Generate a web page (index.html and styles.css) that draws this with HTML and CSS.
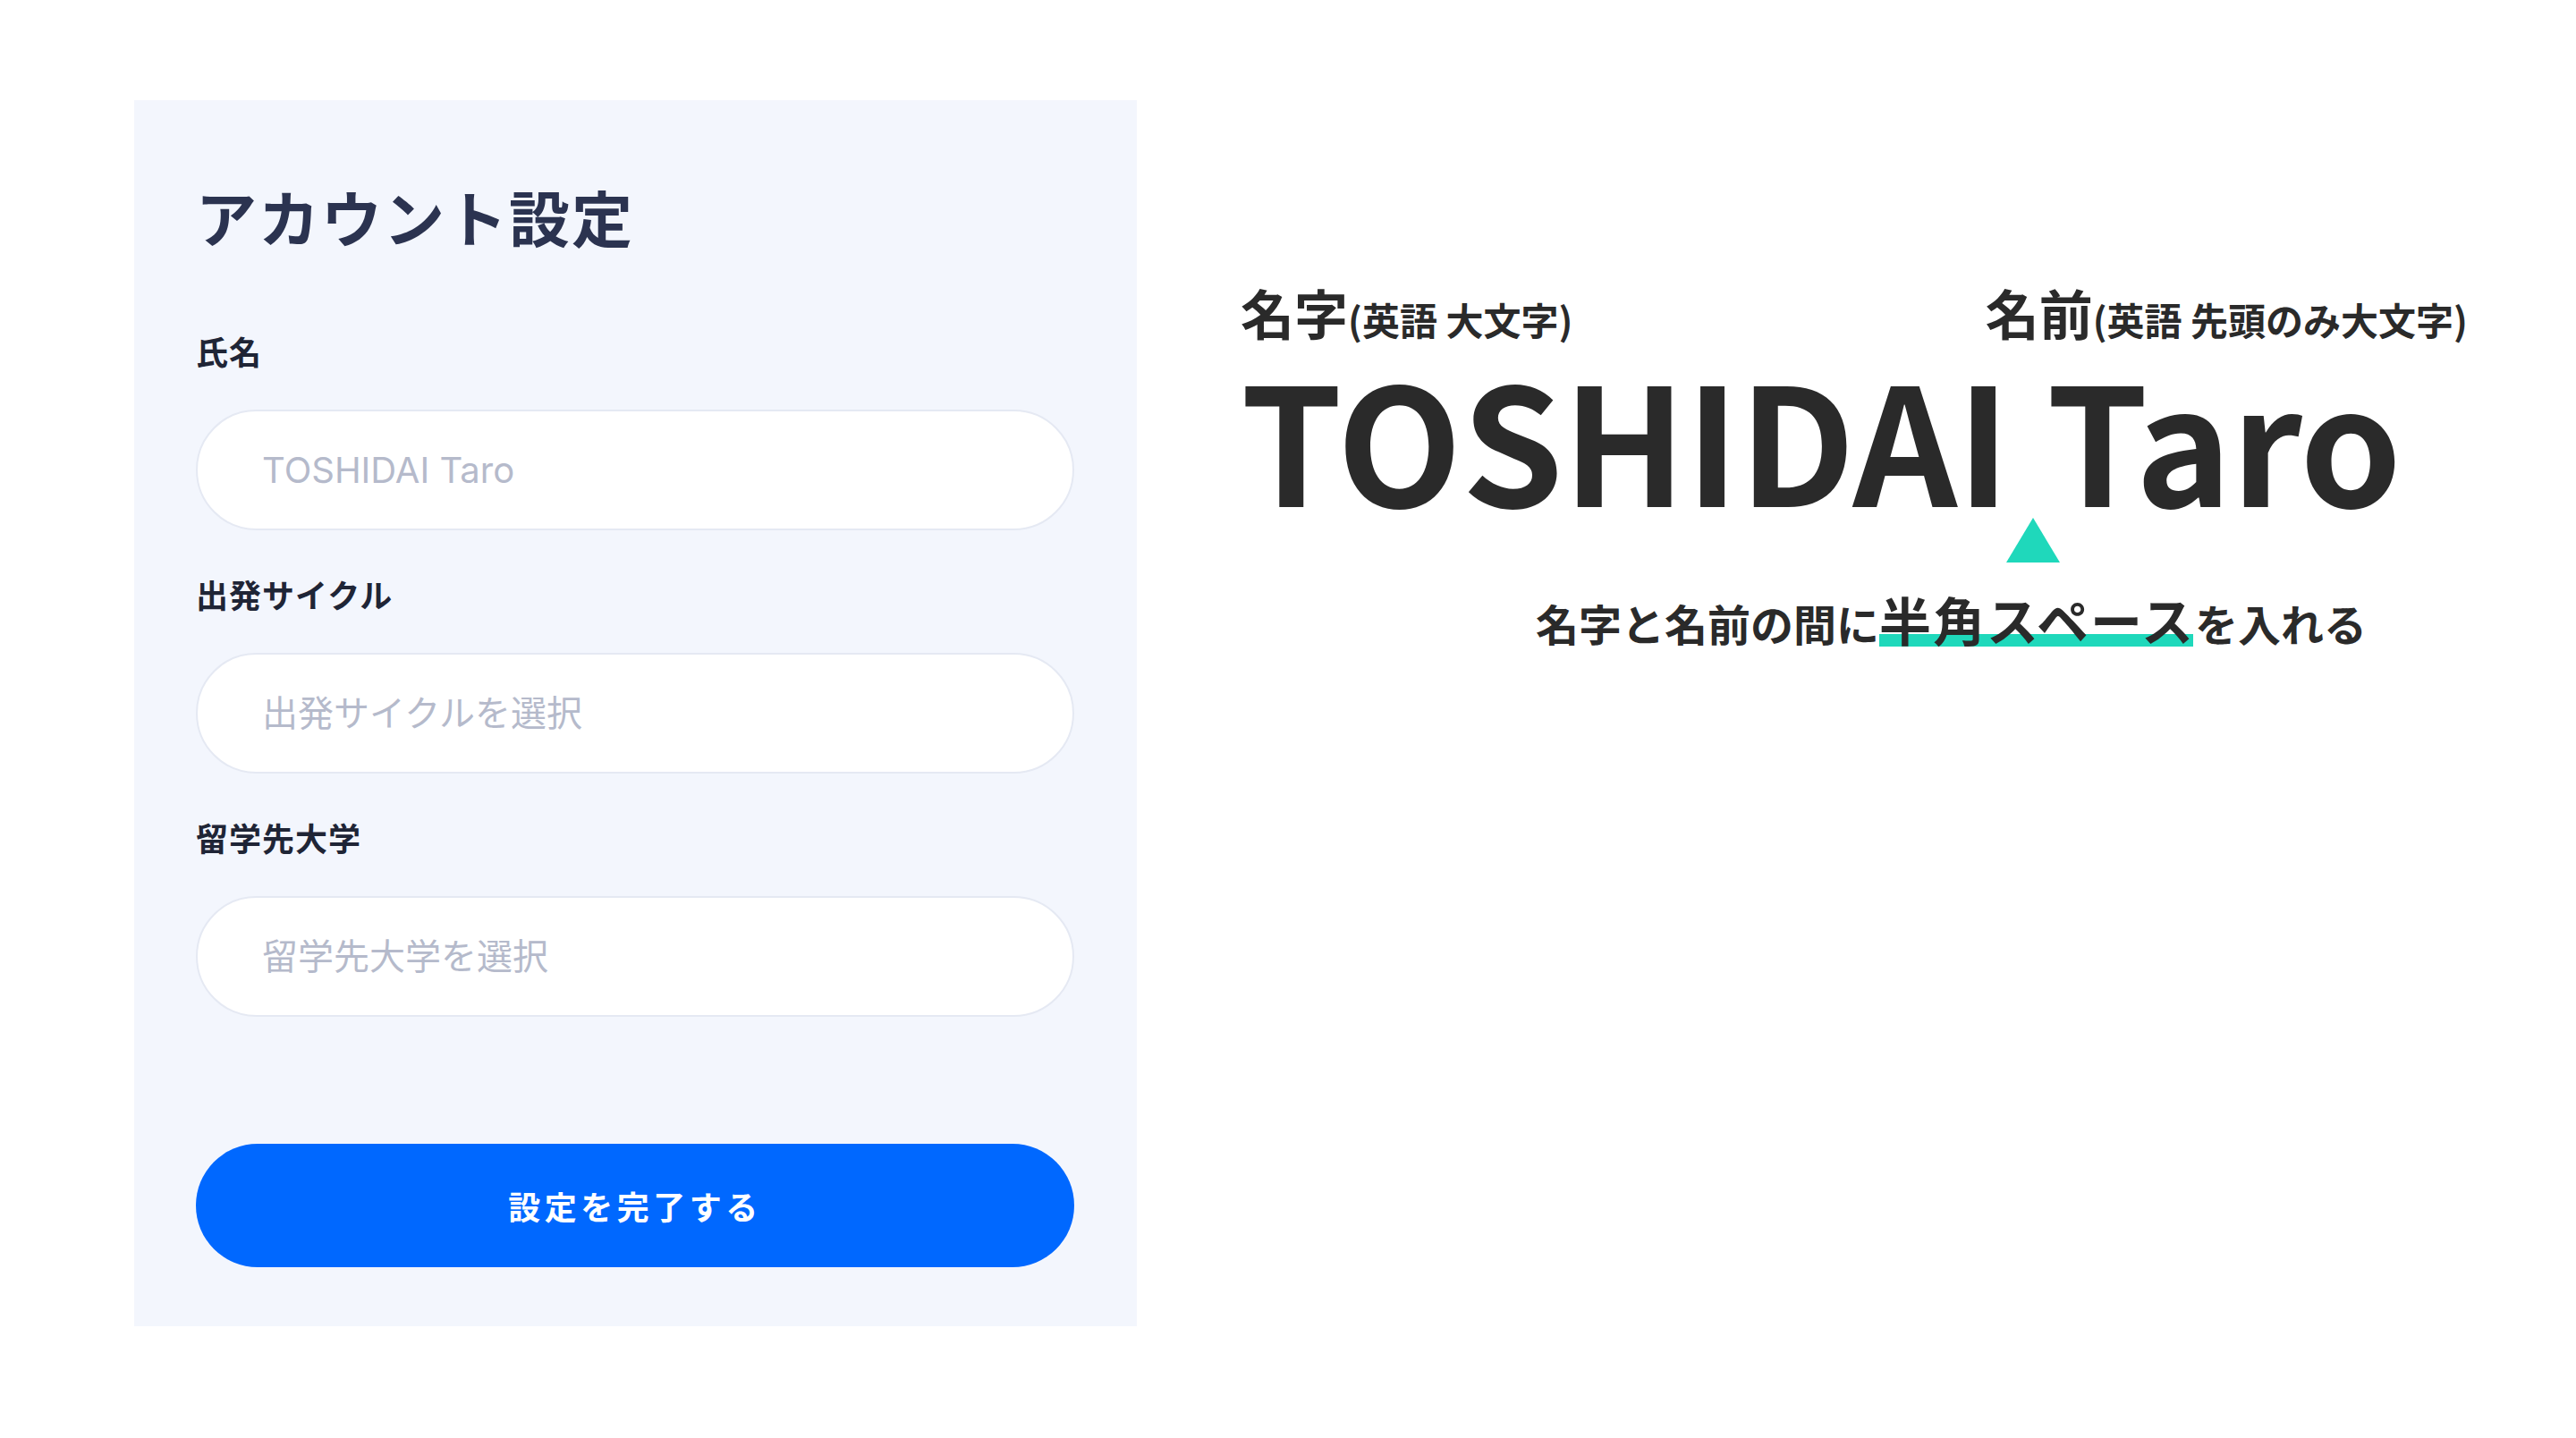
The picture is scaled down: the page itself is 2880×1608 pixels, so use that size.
FILE: index.html
```html
<!DOCTYPE html>
<html lang="ja">
<head>
  <meta charset="UTF-8">
  <meta name="viewport" content="width=device-width, initial-scale=1.0">
  <title>アカウント設定</title>
  <link rel="stylesheet" href="styles.css">
</head>
<body>
  <div class="page">

    <section class="panel">
      <h1 class="panel-title">アカウント設定</h1>
      <form class="settings-form">
        <div class="field">
          <label for="fullName">氏名</label>
          <input type="text" id="fullName" name="fullName" placeholder="TOSHIDAI Taro" />
        </div>

        <div class="field">
          <label for="cycle">出発サイクル</label>
          <select id="cycle" name="cycle">
            <option value="">出発サイクルを選択</option>
          </select>
        </div>

        <div class="field">
          <label for="university">留学先大学</label>
          <select id="university" name="university">
            <option value="">留学先大学を選択</option>
          </select>
        </div>

        <button type="submit">設定を完了する</button>
      </form>
    </section>

    <section class="guide">
      <div class="guide-labels">
        <div class="guide-label">名字<small>(英語 大文字)</small></div>
        <div class="guide-label">名前<small>(英語 先頭のみ大文字)</small></div>
      </div>
      <p class="guide-name">TOSHIDAI Taro</p>
      <div class="guide-arrow"></div>
      <p class="guide-note">名字と名前の間に<span class="mark">半角スペース</span>を入れる</p>
    </section>

  </div>
</body>
</html>
```

FILE: styles.css
```css
body {
  margin: 0;
  background-color: #fff;
  font-family: "Noto Sans CJK JP", "Noto Sans", sans-serif;
}
.page {
  display: flex;
  align-items: flex-start;
  padding: 112px 0 0 150px;
}

/* left: form panel */
.panel {
  flex: none;
  width: 1121px;
  box-sizing: border-box;
  padding: 96px 70px 66px 69px;
  background-color: #f3f6fd;
}
.panel-title {
  margin: 0 0 98px;
  font-size: 68px;
  line-height: 1;
  font-weight: 700;
  letter-spacing: 2px;
  color: #2b3350;
}
.field {
  margin-bottom: 53px;
}
.field:last-of-type {
  margin-bottom: 142px;
}
label {
  display: block;
  margin-bottom: 48px;
  font-size: 36px;
  line-height: 1;
  font-weight: 700;
  letter-spacing: 1px;
  color: #1f2536;
}
input[type="text"], select {
  display: block;
  width: 100%;
  height: 135px;
  box-sizing: border-box;
  padding: 0 72px;
  border: 2px solid #e5e9f3;
  border-radius: 68px;
  background-color: #fff;
  font-family: Inter, "Noto Sans CJK JP", sans-serif;
  font-size: 40px;
  color: #b5bacb;
  outline: none;
  appearance: none;
  -webkit-appearance: none;
}
input[type="text"]::placeholder {
  color: #b5bacb;
}
button {
  display: block;
  width: 100%;
  height: 138px;
  border: none;
  border-radius: 69px;
  background-color: #0068ff;
  color: #fff;
  font-family: "Noto Sans CJK JP", sans-serif;
  font-size: 36px;
  font-weight: 700;
  letter-spacing: 4.5px;
  cursor: pointer;
}

/* right: name guide */
.guide {
  flex: none;
  width: 1372px;
  margin: 207px 0 0 116px;
  color: #2a2a2a;
  font-weight: 700;
}
.guide-labels {
  display: flex;
  justify-content: space-between;
  font-size: 60px;
  line-height: 1;
}
.guide-label small {
  font-size: 42px;
  font-weight: 700;
}
.guide-name {
  margin: 18px 0 0;
  font-size: 182px;
  line-height: 1;
  letter-spacing: -0.5px;
}
.guide-arrow {
  width: 0;
  height: 0;
  margin-left: 856px;
  border-left: 30px solid transparent;
  border-right: 30px solid transparent;
  border-bottom: 50px solid #1fd8bb;
}
.guide-note {
  margin: 34px 0 0;
  padding-left: 330px;
  font-size: 48px;
  line-height: 1;
}
.mark {
  font-size: 58px;
  letter-spacing: 2px;
  background: linear-gradient(#1fd8bb, #1fd8bb) no-repeat;
  background-size: calc(100% - 2px) 14px;
  background-position: 0 calc(100% - 11px);
}
```
